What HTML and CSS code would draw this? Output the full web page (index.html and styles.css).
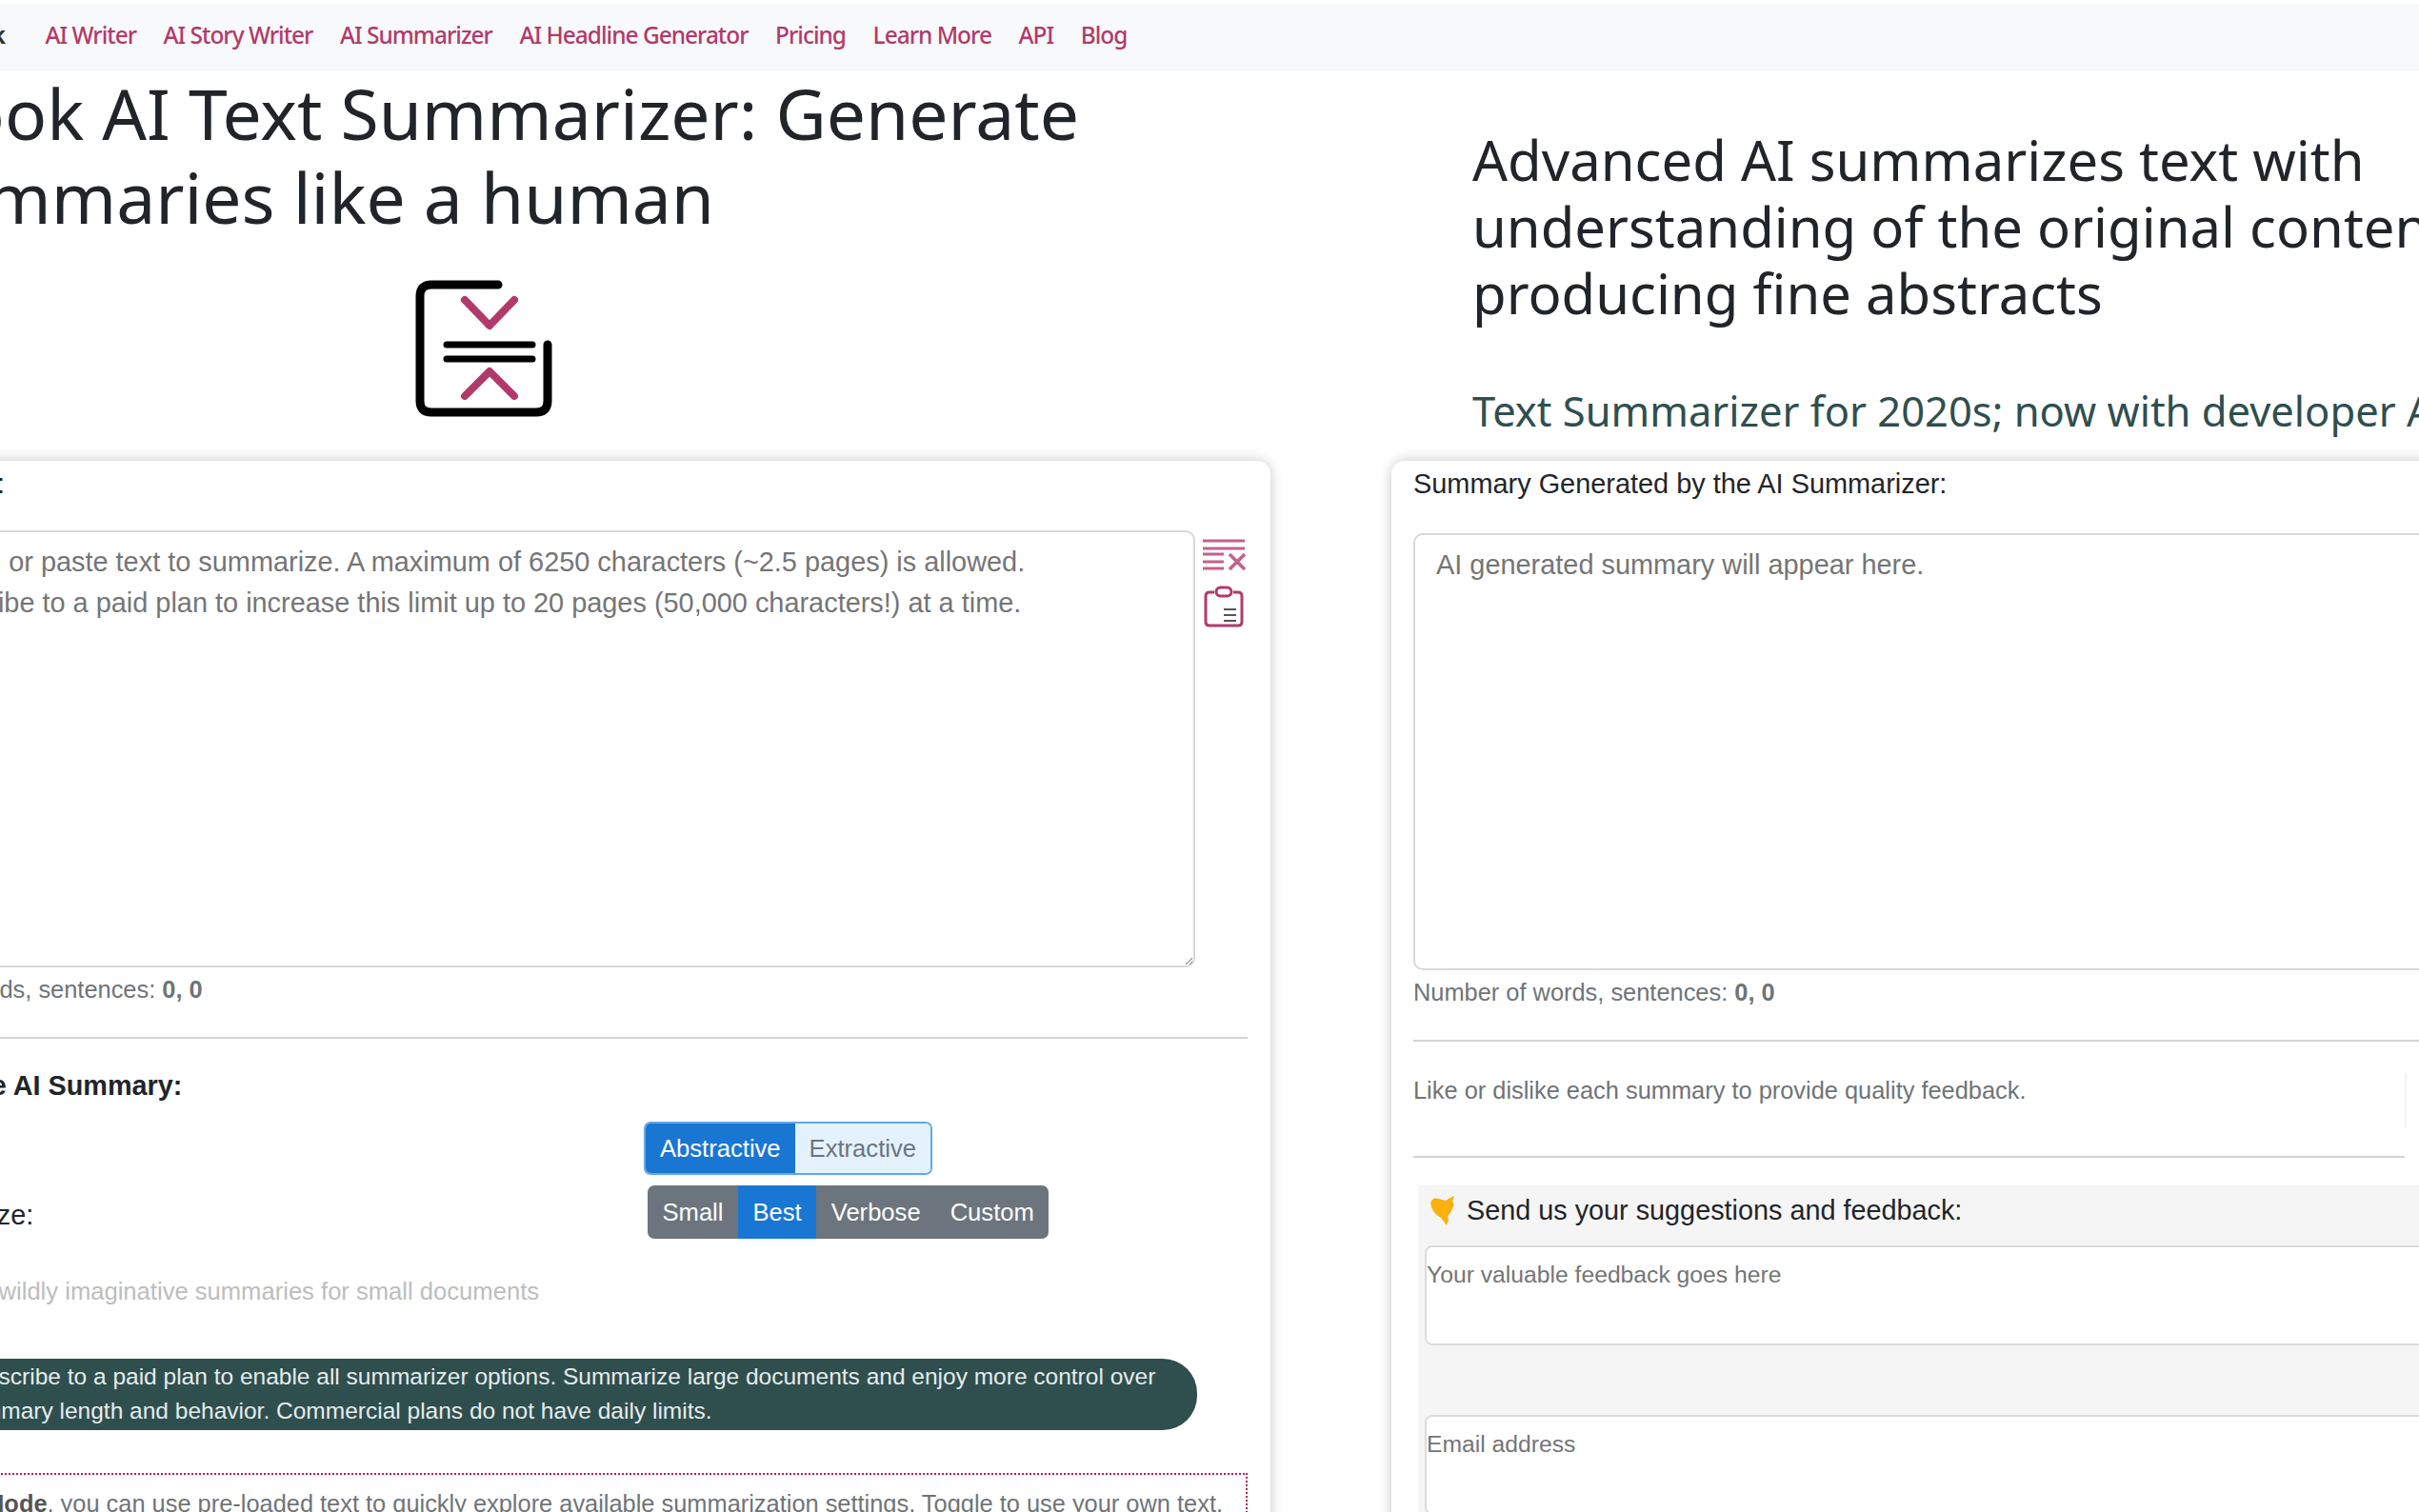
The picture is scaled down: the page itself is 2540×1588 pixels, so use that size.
FILE: index.html
```html
<!DOCTYPE html>
<html lang="en">
<head>
    <meta charset="UTF-8">
    <title>AI Text Summarizer</title>
    <link rel="stylesheet" href="styles.css">
</head>
<body>
    <div class="page">
        <nav class="navbar">
            <span class="brand">Nook</span>
            <a href="#">AI Writer</a>
            <a href="#">AI Story Writer</a>
            <a href="#">AI Summarizer</a>
            <a href="#">AI Headline Generator</a>
            <a href="#">Pricing</a>
            <a href="#">Learn More</a>
            <a href="#">API</a>
            <a href="#">Blog</a>
        </nav>

        <header class="intro">
            <div class="intro-left">
                <h1>Nook AI Text Summarizer: Generate<br>summaries like a human</h1>
                <svg class="logo" width="148" height="148" viewBox="0 0 148 148" fill="none" stroke-width="9" stroke-linecap="round" stroke-linejoin="round">
                    <path d="M88 6H18Q6 6 6 18V128Q6 140 18 140H128Q140 140 140 128V69" stroke="#000"/>
                    <path d="M34 69H124M34 84H124" stroke="#000" stroke-width="7"/>
                    <path d="M53 22L79 49L105 22M53 123L79 97L105 123" stroke="#b23a6b" stroke-width="8"/>
                </svg>
            </div>
            <div class="intro-right">
                <h2>Advanced AI summarizes text with understanding of the original content, producing fine abstracts</h2>
                <h3>Text Summarizer for 2020s; now with developer API</h3>
            </div>
        </header>

        <main class="columns">
            <!-- input -->
            <section class="card card-input">
                <label class="field-label">Original Text:</label>
                <div class="input-row">
                    <textarea class="text-box" placeholder="Type in or paste text to summarize. A maximum of 6250 characters (~2.5 pages) is allowed.&#10;Subscribe to a paid plan to increase this limit up to 20 pages (50,000 characters!) at a time."></textarea>
                    <div class="tools">
                        <svg width="46" height="34" viewBox="0 0 46 34" fill="none" stroke="#c4608c" stroke-width="3">
                            <path d="M1 2H45M1 10H45M1 16H23M1 24H23M1 31H23"/>
                            <path d="M29 16L45 32M45 16L29 32" stroke-width="3.6"/>
                        </svg>
                        <svg width="42" height="44" viewBox="0 0 42 44" fill="none" stroke="#b23a6b" stroke-width="3">
                            <path d="M11 7H6Q2 7 2 11V38Q2 42 6 42H36Q40 42 40 38V11Q40 7 36 7H31"/>
                            <rect x="13" y="2" width="16" height="9" rx="4.5"/>
                            <path d="M21 25H34M21 31H34M21 37H34" stroke="#555" stroke-width="2"/>
                        </svg>
                    </div>
                </div>
                <p class="counter">Number of words, sentences: <b>0, 0</b></p>
                <hr>
                <p class="options-title">Customize the AI Summary:</p>
                <div class="option-row">
                    <span class="option-label">Type:</span>
                    <div class="btn-group outlined">
                        <button class="active">Abstractive</button>
                        <button class="light">Extractive</button>
                    </div>
                </div>
                <div class="option-row size-row">
                    <span class="option-label">Summary Size:</span>
                    <div class="btn-group grey">
                        <button>Small</button>
                        <button class="active">Best</button>
                        <button>Verbose</button>
                        <button>Custom</button>
                    </div>
                </div>
                <p class="hint">Creative, wildly imaginative summaries for small documents</p>
                <p class="promo">Subscribe to a paid plan to enable all summarizer options. Summarize large documents and enjoy more control over summary length and behavior. Commercial plans do not have daily limits.</p>
                <div class="demo-note"><b>In Demo Mode</b>, you can use pre-loaded text to quickly explore available summarization settings. Toggle to use your own text.</div>
            </section>

            <!-- output -->
            <section class="card card-output">
                <label class="field-label">Summary Generated by the AI Summarizer:</label>
                <textarea class="text-box" placeholder="AI generated summary will appear here."></textarea>
                <p class="counter">Number of words, sentences: <b>0, 0</b></p>
                <hr>
                <div class="like-row">
                    <p>Like or dislike each summary to provide quality feedback.</p>
                </div>
                <hr class="short">
                <div class="feedback">
                    <div class="feedback-title">
                        <svg width="27" height="31" viewBox="0 0 27 31">
                            <path d="M1 8Q3 1 9 3Q14 4 17 5Q21 2 26 0L24 6Q27 9 24 13Q23 18 19 21L20 25L18 31Q15 27 12 23Q3 18 1 8Z" fill="#fbb00e"/>
                        </svg>
                        <span>Send us your suggestions and feedback:</span>
                    </div>
                    <textarea class="feedback-box" placeholder="Your valuable feedback goes here"></textarea>
                    <textarea class="feedback-box email-box" placeholder="Email address"></textarea>
                </div>
            </section>
        </main>
    </div>
</body>
</html>
```

FILE: styles.css
```css
html, body {
    margin: 0;
    padding: 0;
    height: 1588px;
    overflow: hidden;
    background-color: #fff;
}
body {
    font-family: "Liberation Sans", Arial, sans-serif;
    color: #212529;
}
/* the screenshot is scrolled sideways, so the page starts left of the window */
.page {
    width: 3240px;
    margin-left: -190px;
}
.navbar {
    display: flex;
    align-items: center;
    gap: 28.6px;
    box-sizing: border-box;
    height: 71px;
    margin-top: 4px;
    padding-bottom: 6px;
    background-color: #f8f9fa;
    font-family: "Noto Sans", sans-serif;
    font-size: 24.45px;
    font-weight: 500;
    letter-spacing: -1px;
}
.navbar a {
    color: #b23a6b;
    text-decoration: none;
}
.brand {
    width: 195px;
    margin-right: 14px;
    text-align: right;
    font-weight: 700;
    color: #333;
}
.intro, .columns {
    display: grid;
    grid-template-columns: 1524px 1524px;
    column-gap: 127px;
}
.intro {
    height: 409px;
    font-family: "Noto Sans", sans-serif;
}
.intro-left {
    padding-left: 95px;
}
h1 {
    margin: 0;
    font-size: 73.2px;
    font-weight: 400;
    line-height: 88px;
}
.logo {
    display: block;
    margin: 42px 0 0 530px;
}
.intro-right {
    padding: 58px 0 0 85px;
}
h2 {
    width: 1150px;
    margin: 0;
    font-size: 58px;
    font-weight: 400;
    line-height: 70px;
}
h3 {
    margin: 58px 0 0;
    font-size: 43.5px;
    font-weight: 400;
    line-height: 60px;
    color: #2f4f4f;
}
.card {
    height: 1200px;
    padding: 7px 24px 0;
    background-color: #fff;
    border-radius: 14px;
    box-shadow: 0 0 14px rgba(0, 0, 0, 0.22);
}
.card-output {
    padding-left: 23px;
}
.field-label {
    display: block;
    font-size: 28.9px;
    line-height: 34px;
}
.card-input .field-label {
    padding-left: 3px;
}
.text-box {
    display: block;
    box-sizing: border-box;
    width: 100%;
    height: 459px;
    padding: 10px 22px;
    border: 2px solid #d6d8da;
    border-radius: 10px;
    background-color: #fff;
    font-family: inherit;
    font-size: 28.9px;
    line-height: 43px;
    outline: none;
}
.text-box::placeholder {
    color: #757575;
    opacity: 1;
}
.card-output .text-box {
    margin-top: 35px;
}
.input-row {
    display: flex;
    margin-top: 32px;
}
.input-row .text-box {
    width: 1421px;
    flex: none;
    padding-left: 72px;
}
.tools {
    display: flex;
    flex-direction: column;
    align-items: center;
    gap: 15px;
    padding: 9px 0 0 7px;
}
.tools svg {
    display: block;
}
.counter {
    margin: 5px 0 0;
    font-size: 25.4px;
    line-height: 36px;
    color: #6f7477;
}
.card-input .counter {
    margin-left: -1px;
}
hr {
    height: 2px;
    margin: 32px 0 0;
    border: none;
    background-color: #d4d4d4;
}
.options-title {
    margin: 31px 0 0 -24px;
    font-size: 28.8px;
    font-weight: bold;
    line-height: 36px;
}
.option-row {
    display: grid;
    grid-template-columns: 842px auto;
    justify-content: start;
    align-items: center;
    margin-top: 20px;
    font-size: 28.8px;
}
.size-row {
    grid-template-columns: 846px auto;
    margin-top: 11px;
}
.size-row .option-label {
    padding-left: 6px;
}
.option-label {
    padding-top: 6px;
}
.btn-group {
    display: flex;
    height: 56px;
    overflow: hidden;
    border-radius: 7px;
}
.btn-group button {
    padding: 0 15.5px;
    border: none;
    background-color: transparent;
    color: #fff;
    font-family: inherit;
    font-size: 25.6px;
}
.btn-group.outlined button {
    padding: 0 15px;
}
.btn-group button.active {
    background-color: #1976d2;
}
.btn-group.grey {
    background-color: #6c757d;
}
.btn-group.outlined {
    box-sizing: border-box;
    border: 2px solid #64a8e6;
}
.btn-group button.light {
    background-color: #e3f2fd;
    color: #6c757d;
}
.hint {
    margin: 37px 0 0 55px;
    font-size: 25.6px;
    line-height: 36px;
    color: #bdbdbd;
}
.promo {
    box-sizing: border-box;
    width: 1423px;
    height: 75px;
    margin: 53px 0 0;
    padding: 1px 30px 0 121px;
    border-radius: 36px;
    background-color: #2f4f4f;
    color: #e6ecec;
    font-size: 24.5px;
    line-height: 36px;
}
.demo-note {
    margin-top: 45px;
    padding: 12px 10px 10px 40px;
    border: 2px dotted #c2185b;
    font-size: 25.4px;
    line-height: 36px;
    color: #6f7477;
}
.demo-note b {
    color: #555;
}
.like-row {
    display: flex;
    align-items: flex-start;
    box-sizing: border-box;
    width: 1043px;
    height: 58px;
    margin-top: 33px;
    border-right: 2px solid #f3f3f3;
}
.like-row p {
    margin: 0;
    font-size: 25.4px;
    line-height: 36px;
    color: #6f7477;
}
hr.short {
    width: 1041px;
    margin-top: 29px;
}
.feedback {
    margin: 29px 0 0 5px;
    padding: 0 7px;
    height: 400px;
    background-color: #f5f5f5;
}
.feedback-title {
    display: flex;
    align-items: center;
    gap: 12px;
    height: 52px;
    margin-bottom: 11px;
    padding-left: 5px;
    font-size: 28.8px;
}
.feedback-title svg {
    flex: none;
}
.feedback-box {
    display: block;
    box-sizing: border-box;
    width: 100%;
    height: 105px;
    padding: 15px 0;
    border: 2px solid #dcdcdc;
    border-radius: 8px;
    background-color: #fff;
    font-family: inherit;
    font-size: 24.7px;
    line-height: 28px;
    outline: none;
    resize: none;
}
.feedback-box::placeholder {
    color: #757575;
    opacity: 1;
}
.email-box {
    margin-top: 73px;
}
```
